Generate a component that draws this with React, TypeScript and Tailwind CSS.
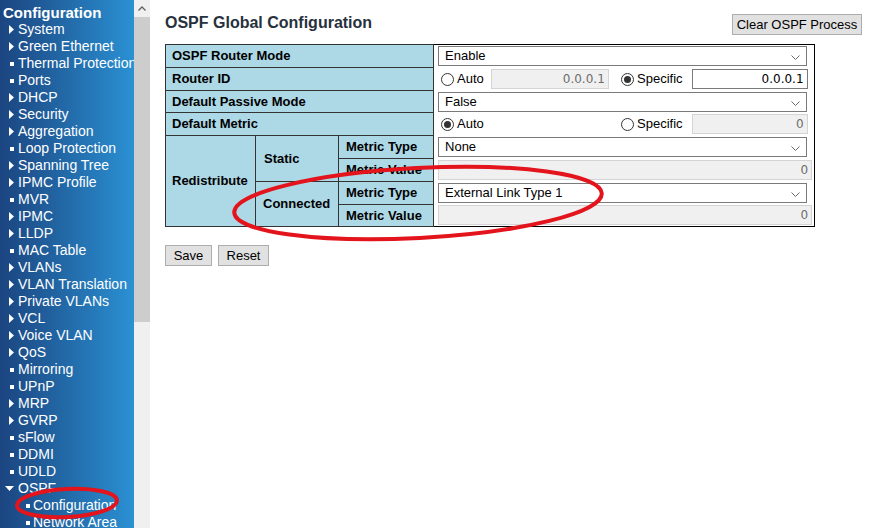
import React from "react";

type Kind = "arrow" | "square" | "open" | "sub";

const menu: [string, Kind][] = [
  ["System", "arrow"],
  ["Green Ethernet", "arrow"],
  ["Thermal Protection", "square"],
  ["Ports", "square"],
  ["DHCP", "arrow"],
  ["Security", "arrow"],
  ["Aggregation", "arrow"],
  ["Loop Protection", "square"],
  ["Spanning Tree", "arrow"],
  ["IPMC Profile", "arrow"],
  ["MVR", "square"],
  ["IPMC", "arrow"],
  ["LLDP", "arrow"],
  ["MAC Table", "square"],
  ["VLANs", "arrow"],
  ["VLAN Translation", "arrow"],
  ["Private VLANs", "arrow"],
  ["VCL", "arrow"],
  ["Voice VLAN", "arrow"],
  ["QoS", "arrow"],
  ["Mirroring", "square"],
  ["UPnP", "square"],
  ["MRP", "arrow"],
  ["GVRP", "arrow"],
  ["sFlow", "square"],
  ["DDMI", "square"],
  ["UDLD", "square"],
  ["OSPF", "open"],
  ["Configuration", "sub"],
  ["Network Area", "sub"],
];

const MenuIcon = ({ kind }: { kind: Kind }) => {
  if (kind === "arrow")
    return (
      <svg width="5" height="9" viewBox="0 0 5 9">
        <path d="M0 0 L5 4.5 L0 9 Z" fill="#fff" />
      </svg>
    );
  if (kind === "open")
    return (
      <svg width="9" height="5" viewBox="0 0 9 5">
        <path d="M0 0 L9 0 L4.5 5 Z" fill="#fff" />
      </svg>
    );
  return <span className="block w-[4px] h-[4px] bg-white" />;
};

const Sidebar = () => (
  <div className="w-[134px] h-screen shrink-0 overflow-hidden bg-linear-to-r from-[#1b4580] to-[#2a91d3] text-white font-['Liberation_Sans',Arial,sans-serif] pt-[4px]">
    <div className="pl-[3px] h-[17px] leading-[17px] text-[15px] font-bold">Configuration</div>
    {menu.map(([label, kind]) => (
      <div key={label + kind} className="flex items-center h-[17px] text-[14px] leading-[17px] whitespace-nowrap">
        <span
          className={
            kind === "sub"
              ? "w-[33px] shrink-0 flex justify-end pr-[3px]"
              : "w-[18px] shrink-0 flex justify-end pr-[4px]"
          }
        >
          <MenuIcon kind={kind} />
        </span>
        <span>{label}</span>
      </div>
    ))}
  </div>
);

const Scrollbar = () => (
  <div className="w-[16px] h-screen shrink-0 bg-[#f0f0f0] flex flex-col">
    <div className="h-[17px] flex items-center justify-center">
      <svg width="8" height="5" viewBox="0 0 8 5">
        <path d="M0.5 4.5 L4 1 L7.5 4.5" stroke="#606060" strokeWidth="1.3" fill="none" />
      </svg>
    </div>
    <div className="h-[305px] bg-[#cdcdcd]" />
  </div>
);

const Chevron = () => (
  <svg width="9" height="5" viewBox="0 0 9 5" className="absolute right-[6px] top-[8px]">
    <path d="M0.5 0.5 L4.5 4.5 L8.5 0.5" stroke="#6a6a6a" strokeWidth="1" fill="none" />
  </svg>
);

const Select = ({ value }: { value: string }) => (
  <div className="relative w-[369px] h-[20px] border border-[#7a7a7a] bg-white text-[13px] leading-[18px] pl-[6px]">
    {value}
    <Chevron />
  </div>
);

const Radio = ({ checked, label }: { checked?: boolean; label: string }) => (
  <span className="flex items-center text-[13px]">
    <span className="w-[13px] h-[13px] rounded-full border border-[#333] bg-white flex items-center justify-center">
      {checked && <span className="w-[7px] h-[7px] rounded-full bg-[#333]" />}
    </span>
    <span className="ml-[3px]">{label}</span>
  </span>
);

const Field = ({ value, width, disabled }: { value: string; width: string; disabled?: boolean }) => (
  <div
    className={
      (disabled
        ? "bg-[#f0f0f0] border-[#d4d4d4] text-[#6d6d6d] "
        : "bg-white border-[#7a7a7a] text-black ") +
      width +
      " h-[20px] border text-right pr-[3px] text-[12px] leading-[18px] font-['DejaVu_Sans',sans-serif]"
    }
  >
    {value}
  </div>
);

const lbl = "bg-[#add8e6] border border-[#333] font-bold text-[13px] px-[6px] whitespace-nowrap";
const val = "border-l border-[#333] pl-[4px] align-middle";

const OspfTable = () => (
  <table className="w-[650px] border-collapse border border-black text-[13px] text-black table-fixed">
    <colgroup>
      <col className="w-[90px]" />
      <col className="w-[83px]" />
      <col className="w-[95px]" />
      <col />
    </colgroup>
    <tbody>
      <tr className="h-[23px]">
        <td colSpan={3} className={lbl}>OSPF Router Mode</td>
        <td className={val}><Select value="Enable" /></td>
      </tr>
      <tr className="h-[23px]">
        <td colSpan={3} className={lbl}>Router ID</td>
        <td className={val}>
          <div className="flex items-center">
            <span className="w-[183px] flex items-center pl-[3px]">
              <Radio label="Auto" />
              <span className="ml-[7px]">
                <Field value="0.0.0.1" width="w-[118px]" disabled />
              </span>
            </span>
            <Radio checked label="Specific" />
            <span className="ml-[9px]">
              <Field value="0.0.0.1" width="w-[116px]" />
            </span>
          </div>
        </td>
      </tr>
      <tr className="h-[22px]">
        <td colSpan={3} className={lbl}>Default Passive Mode</td>
        <td className={val}><Select value="False" /></td>
      </tr>
      <tr className="h-[23px]">
        <td colSpan={3} className={lbl}>Default Metric</td>
        <td className={val}>
          <div className="flex items-center">
            <span className="w-[183px] flex items-center pl-[3px]">
              <Radio checked label="Auto" />
            </span>
            <Radio label="Specific" />
            <span className="ml-[9px]">
              <Field value="0" width="w-[116px]" disabled />
            </span>
          </div>
        </td>
      </tr>
      <tr className="h-[23px]">
        <td rowSpan={4} className={lbl}>Redistribute</td>
        <td rowSpan={2} className={lbl + " px-[8px]"}>Static</td>
        <td className={lbl + " px-[7px]"}>Metric Type</td>
        <td className={val}><Select value="None" /></td>
      </tr>
      <tr className="h-[23px]">
        <td className={lbl + " px-[7px]"}>Metric Value</td>
        <td className={val}><Field value="0" width="w-[374px]" disabled /></td>
      </tr>
      <tr className="h-[23px]">
        <td rowSpan={2} className={lbl + " px-[7px]"}>Connected</td>
        <td className={lbl + " px-[7px]"}>Metric Type</td>
        <td className={val}><Select value="External Link Type 1" /></td>
      </tr>
      <tr className="h-[22px]">
        <td className={lbl + " px-[7px]"}>Metric Value</td>
        <td className={val}><Field value="0" width="w-[374px]" disabled /></td>
      </tr>
    </tbody>
  </table>
);

const Btn = ({ children, className = "" }: { children: React.ReactNode; className?: string }) => (
  <button className={"h-[21px] bg-[#e1e1e1] border border-[#adadad] text-[13px] text-black leading-[19px] " + className}>
    {children}
  </button>
);

const App = () => {
  return (
    <div className="relative flex w-full h-screen overflow-hidden bg-white font-['Liberation_Sans',Arial,sans-serif]">
      <Sidebar />
      <Scrollbar />
      <main className="flex-1 pl-[15px] pr-[11px]">
        <div className="flex items-start justify-between h-[44px]">
          <h1 className="mt-[13px] text-[16px] font-bold text-[#26313d] leading-[20px]">OSPF Global Configuration</h1>
          <Btn className="mt-[14px] w-[130px]">Clear OSPF Process</Btn>
        </div>
        <OspfTable />
        <div className="flex gap-[6px] mt-[18px]">
          <Btn className="w-[47px]">Save</Btn>
          <Btn className="w-[51px]">Reset</Btn>
        </div>
      </main>
      <svg className="absolute inset-0 pointer-events-none" width="873" height="528" viewBox="0 0 873 528">
        <ellipse cx="418" cy="203" rx="184" ry="35" transform="rotate(-3 418 203)" fill="none" stroke="#e3141c" strokeWidth="4" />
        <ellipse cx="67" cy="503" rx="50" ry="14" transform="rotate(-3 67 503)" fill="none" stroke="#e3141c" strokeWidth="4" />
      </svg>
    </div>
  );
};

export default App;
